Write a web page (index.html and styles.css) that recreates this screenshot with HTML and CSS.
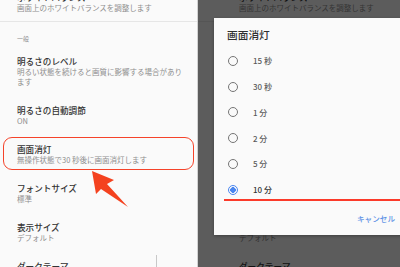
FILE: index.html
```html
<!DOCTYPE html>
<html lang="ja">
<head>
<meta charset="utf-8">
<link rel="stylesheet" href="styles.css">
</head>
<body>
<div class="panel left">
  <div class="list">
    <div class="item"><div class="title">ホワイトバランス</div><div class="sub">画面上のホワイトバランスを調整します</div></div>
    <div class="divider"></div>
    <div class="header">一般</div>
    <div class="item"><div class="title">明るさのレベル</div><div class="sub">明るい状態を続けると画質に影響する場合があり<br>ます</div></div>
    <div class="item"><div class="title">明るさの自動調節</div><div class="sub">ON</div></div>
    <div class="item marked"><div class="title">画面消灯</div><div class="sub">無操作状態で30 秒後に画面消灯します</div><div class="ring"></div></div>
    <div class="item"><div class="title">フォントサイズ</div><div class="sub">標準</div></div>
    <div class="item"><div class="title">表示サイズ</div><div class="sub">デフォルト</div></div>
    <div class="item"><div class="title">ダークテーマ</div><div class="sub">OFF</div></div>
  </div>
  <div class="scroll"></div>
  <svg class="arrow" width="198" height="267" viewBox="0 0 198 267"><polygon points="92,171 114,180 107,184 128,207 101,189 96,194" fill="#f4421f"/></svg>
</div>
<div class="panel right">
  <div class="list">
    <div class="item"><div class="title">ホワイトバランス</div><div class="sub">画面上のホワイトバランスを調整します</div></div>
    <div class="divider"></div>
    <div class="header covered">一般</div>
    <div class="item covered"><div class="title">明るさのレベル</div><div class="sub">明るい状態を続けると画質に影響する場合があり<br>ます</div></div>
    <div class="item covered"><div class="title">明るさの自動調節</div><div class="sub">ON</div></div>
    <div class="item covered"><div class="title">画面消灯</div><div class="sub">無操作状態で30 秒後に画面消灯します</div></div>
    <div class="item covered"><div class="title">フォントサイズ</div><div class="sub">標準</div></div>
    <div class="item"><div class="title covered">表示サイズ</div><div class="sub">デフォルト</div></div>
    <div class="item"><div class="title">ダークテーマ</div><div class="sub">OFF</div></div>
  </div>
  <div class="scrim"></div>
  <div class="dialog">
    <div class="dtitle">画面消灯</div>
    <div class="opts">
      <div class="opt"><span class="radio"></span><span class="label">15 秒</span></div>
      <div class="opt"><span class="radio"></span><span class="label">30 秒</span></div>
      <div class="opt"><span class="radio"></span><span class="label">1 分</span></div>
      <div class="opt"><span class="radio"></span><span class="label">2 分</span></div>
      <div class="opt"><span class="radio"></span><span class="label">5 分</span></div>
      <div class="opt on"><span class="radio"></span><span class="label">10 分</span></div>
    </div>
    <div class="actions"><span class="cancel">キャンセル</span></div>
    <div class="underline"></div>
  </div>
</div>
</body>
</html>
```
FILE: styles.css
```css
html, body { margin: 0; padding: 0; }
body {
  width: 400px; height: 267px; overflow: hidden;
  display: flex;
  font-family: "Noto Sans CJK JP", "Noto Sans", sans-serif;
  background: #5c5c5c;
}
.panel { position: relative; height: 267px; overflow: hidden; background: #fafafa; }
.left { width: 197px; border-right: 1px solid #d2d2d2; }
.right { flex: 1; }
.list { margin-top: -18px; display: flex; flex-direction: column; }
.right .list { padding-left: 41px; }
.left .list { padding-left: 17px; }
.item { position: relative; padding: 9px 0 8px; }
.title { font-size: 8.6px; line-height: 12px; color: #333; font-weight: 500; white-space: nowrap; }
.sub { font-size: 7.5px; line-height: 10px; color: #8e8e8e; white-space: nowrap; }
.covered { visibility: hidden; }
.divider { height: 1px; background: #e6e6e6; margin-left: -60px; }
.header { font-size: 6px; line-height: 12px; color: #8a8a8a; padding: 11px 0 1px; }
.ring {
  position: absolute; left: -14px; top: 3px; width: 189px; height: 31px;
  border: 1.5px solid #f5432a; border-radius: 9px;
}
.scroll { position: absolute; left: 156px; top: 255px; width: 1px; height: 12px; background: #c8c8c8; }
.arrow { position: absolute; left: 0; top: 0; }
.scrim { position: absolute; inset: 0; background: rgba(0,0,0,0.63); }
.dialog {
  position: absolute; left: 16px; top: 18px; width: 200px; height: 217px;
  background: #fafafa; box-sizing: border-box;
  padding: 9px 0 0 0;
  box-shadow: 0 1px 3px rgba(0,0,0,0.3);
  display: flex; flex-direction: column;
}
.dtitle { font-size: 10.7px; line-height: 16px; color: #303030; padding-left: 13px; font-weight: 500; }
.opts { margin-top: 5px; display: flex; flex-direction: column; }
.opt { height: 25.75px; display: flex; align-items: center; padding-left: 14px; }
.radio {
  width: 10px; height: 10px; box-sizing: border-box; border-radius: 50%;
  border: 1.5px solid #757575; margin-right: 15px; flex: none;
}
.opt.on .radio {
  border-color: #4a86f0;
  background: radial-gradient(circle, #4a86f0 0 2.6px, transparent 3px);
}
.label { font-size: 8px; color: #5a5a5a; font-weight: 500; }
.opt.on .label { color: #333; }
.actions { margin-top: 10px; line-height: 12px; display: flex; justify-content: flex-end; padding-right: 19px; }
.cancel { font-size: 7.6px; color: #5f93e6; font-weight: 500; }
.underline { position: absolute; left: 10px; right: 0; top: 181px; height: 2px; background: #fb3a2a; }
```
